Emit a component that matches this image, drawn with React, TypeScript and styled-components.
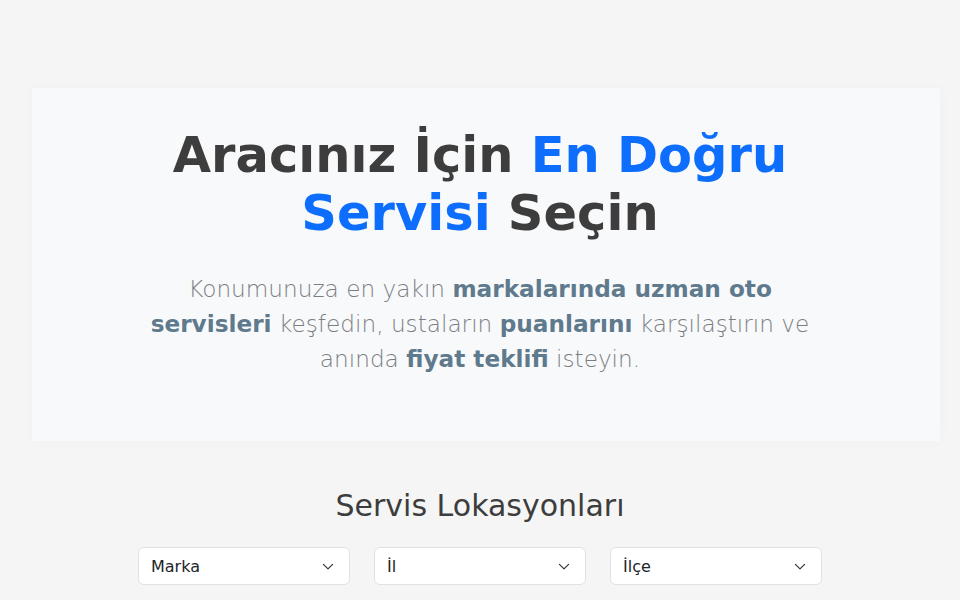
import * as React from "react";
import styled, { createGlobalStyle } from "styled-components";

const GlobalStyle = createGlobalStyle`
  * { box-sizing: border-box; }
  body {
    margin: 0;
    background: #f5f5f5;
    font-family: "DejaVu Sans", sans-serif;
    color: #212529;
  }
`;

const Page = styled.main`
  padding-top: 88px;
`;

const Hero = styled.section`
  margin: 0 20px 0 32px;
  padding: 38px 12px 65px 0;
  background: #f8f9fb;
  box-shadow: 0 0 16px rgba(0, 0, 0, 0.025);
  text-align: center;
`;

const HeroInner = styled.div`
  max-width: 690px;
  margin: 0 auto;
`;

const Title = styled.h1`
  margin: 0 0 29px;
  font-size: 49.5px;
  line-height: 58px;
  font-weight: 700;
  color: #3d3d3d;
`;

const Accent = styled.span`
  color: #0d6efd;
`;

const Lead = styled.p`
  margin: 0;
  font-family: "DejaVu Sans ExtraLight", "DejaVu Sans", sans-serif;
  font-size: 23.2px;
  line-height: 35px;
  font-weight: 200;
  color: #7b7f83;

  strong {
    font-family: "DejaVu Sans", sans-serif;
    font-weight: 700;
    color: #5f7a8c;
  }
`;

const Locations = styled.section`
  padding-top: 47px;
  text-align: center;
`;

const SectionTitle = styled.h2`
  margin: 0 0 23px;
  font-size: 30px;
  line-height: 1.2;
  font-weight: 400;
  color: #3d3d3d;
`;

const Filters = styled.div`
  display: grid;
  grid-template-columns: repeat(3, 212px);
  gap: 24px;
  justify-content: center;
`;

const SelectBox = styled.div`
  position: relative;
  height: 38px;
  display: flex;
  align-items: center;
  padding: 0 36px 0 12px;
  background: #fff;
  border: 1px solid #dee2e6;
  border-radius: 6px;
  font-size: 16px;
  color: #212529;
  text-align: left;

  svg {
    position: absolute;
    right: 14px;
    top: 50%;
    transform: translateY(-50%);
  }
`;

const Chevron = () => (
  <svg width="14" height="10" viewBox="0 0 16 12" fill="none">
    <path d="M2.5 4l5.5 5.5 5.5-5.5" stroke="#343a40" strokeWidth="1.5" strokeLinecap="round" strokeLinejoin="round" />
  </svg>
);

const filters = ["Marka", "İl", "İlçe"];

export default function App() {
  return (
    <>
      <GlobalStyle />
      <Page>
        <Hero>
          <HeroInner>
            <Title>
              Aracınız İçin <Accent>En Doğru Servisi</Accent> Seçin
            </Title>
            <Lead>
              Konumunuza en yakın <strong>markalarında uzman oto servisleri</strong> keşfedin,
              ustaların <strong>puanlarını</strong> karşılaştırın ve anında{" "}
              <strong>fiyat teklifi</strong> isteyin.
            </Lead>
          </HeroInner>
        </Hero>
        <Locations>
          <SectionTitle>Servis Lokasyonları</SectionTitle>
          <Filters>
            {filters.map((f) => (
              <SelectBox key={f}>
                {f}
                <Chevron />
              </SelectBox>
            ))}
          </Filters>
        </Locations>
      </Page>
    </>
  );
}
